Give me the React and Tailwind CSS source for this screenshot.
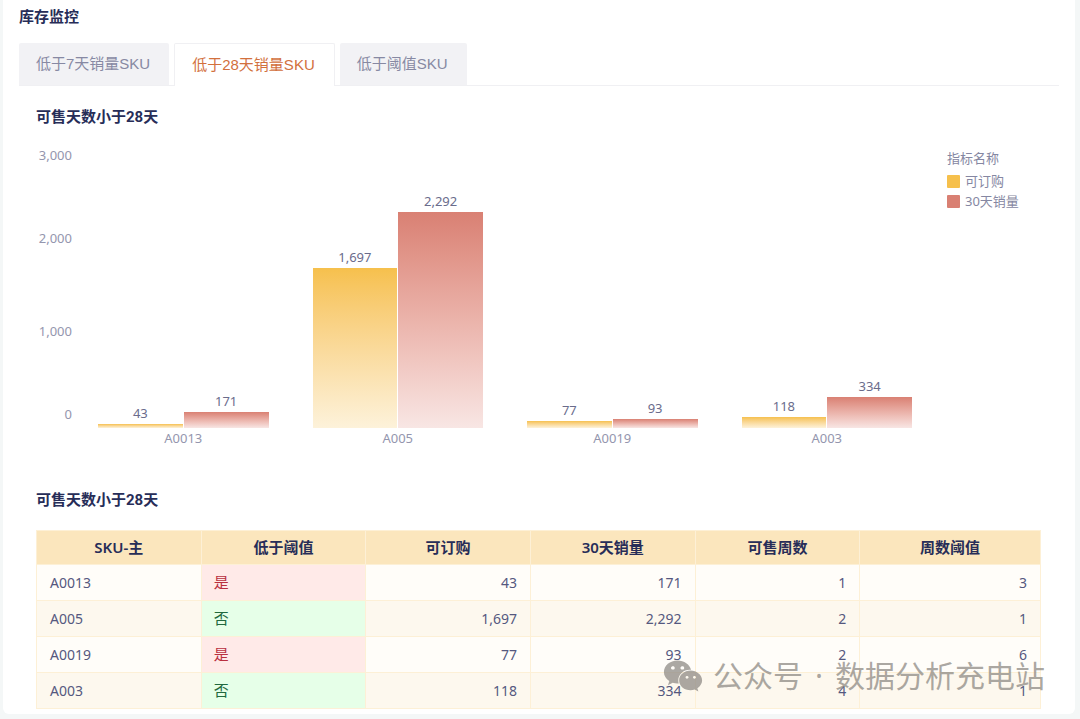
import React, { useState } from 'react';
import { FaWeixin } from 'react-icons/fa';

const tabs = ['低于7天销量SKU', '低于28天销量SKU', '低于阈值SKU'];

const rows = [
    { sku: 'A0013', below: '是', stock: 43, sales: 171, weeks: 1, limit: 3 },
    { sku: 'A005', below: '否', stock: 1697, sales: 2292, weeks: 2, limit: 1 },
    { sku: 'A0019', below: '是', stock: 77, sales: 93, weeks: 2, limit: 6 },
    { sku: 'A003', below: '否', stock: 118, sales: 334, weeks: 4, limit: 1 },
];

const headers = ['SKU-主', '低于阈值', '可订购', '30天销量', '可售周数', '周数阈值'];

const AXIS_MAX = 3000;

const format = (n) => n.toLocaleString('en-US');

const SectionTitle = ({ children }) => (
    <h2 className="font-['Roboto','Noto_Sans_CJK_SC',sans-serif] text-[15px] leading-6 font-bold text-[#272d58]">
        {children}
    </h2>
);

const Bar = ({ value, color }) => (
    <div className="flex h-full flex-1 flex-col justify-end">
        <span className="mb-px text-center leading-5 text-[#6a6c8c]">{format(value)}</span>
        <div className={`shrink-0 bg-linear-to-b ${color}`} style={{ height: `${(value / AXIS_MAX) * 100}%` }} />
    </div>
);

const BarChart = () => (
    <div className="mt-4 flex text-[13px] text-[#9496ae]">
        {/* y axis */}
        <div className="flex h-[283px] w-10 flex-col pr-1 pb-1 text-right leading-5">
            <div className="flex flex-1 items-start justify-end">3,000</div>
            <div className="flex flex-2 items-center justify-end">2,000</div>
            <div className="flex flex-2 items-center justify-end">1,000</div>
            <div className="flex flex-1 items-end justify-end">0</div>
        </div>

        {/* bars */}
        <div className="flex flex-1">
            {rows.map((row) => (
                <div key={row.sku} className="flex-1 px-[22px]">
                    <div className="flex h-[283px] gap-px">
                        <Bar value={row.stock} color="from-[#f6c04c] to-[#fdf2da]" />
                        <Bar value={row.sales} color="from-[#d98073] to-[#f8e6e4]" />
                    </div>
                    <div className="text-center leading-5">{row.sku}</div>
                </div>
            ))}
        </div>

        {/* legend */}
        <div className="ml-[13px] w-[94px] pt-[3px] leading-5 text-[#8587a2]">
            <div className="mb-[3px]">指标名称</div>
            <div className="flex items-center gap-[5px]">
                <span className="size-[13px] rounded-[1px] bg-[#f6c04c]" />
                可订购
            </div>
            <div className="flex items-center gap-[5px]">
                <span className="size-[13px] rounded-[1px] bg-[#d98073]" />
                30天销量
            </div>
        </div>
    </div>
);

const StockTable = () => (
    <table className="mt-[18px] w-full table-fixed border-collapse text-sm text-[#55587f]">
        <thead>
            <tr className="h-[34px] bg-[#fbe6bd] text-[15px] text-[#272d58]">
                {headers.map((header) => (
                    <th key={header} className="w-[16.4%] border border-[#fdf0d6] p-0 font-semibold last:w-auto">
                        {header}
                    </th>
                ))}
            </tr>
        </thead>
        <tbody>
            {rows.map((row) => (
                <tr key={row.sku} className="h-9 bg-[#fffdf9] even:bg-[#fdf8ee]">
                    <td className="border border-[#fdf0d6] px-[13px] py-0">{row.sku}</td>
                    <td
                        className={`border border-[#fdf0d6] px-3 py-0 text-[15px] ${
                            row.below === '是' ? 'bg-[#ffeae8] text-[#b9303f]' : 'bg-[#e6ffe8] text-[#22683e]'
                        }`}
                    >
                        {row.below}
                    </td>
                    {[row.stock, row.sales, row.weeks, row.limit].map((value, i) => (
                        <td key={i} className="border border-[#fdf0d6] px-[13px] py-0 text-right">
                            {format(value)}
                        </td>
                    ))}
                </tr>
            ))}
        </tbody>
    </table>
);

const App = () => {
    const [active, setActive] = useState(1);

    return (
        <div className="min-h-screen bg-[#f4f7f7] pr-[5px] pl-[3px] font-['Noto_Sans','Noto_Sans_CJK_SC',sans-serif]">
            <main className="relative rounded-b-md bg-white px-4 pt-1 pb-[5px]">
                <h1 className="text-[15px] leading-6 font-bold text-[#272d58]">库存监控</h1>

                <div className="mt-[15px] flex gap-[5px] border-b border-[#f0f0f3]">
                    {tabs.map((tab, i) => (
                        <button
                            key={tab}
                            type="button"
                            onClick={() => setActive(i)}
                            className={`rounded-t-xs pr-[19px] pl-[17px] font-['Liberation_Sans','Noto_Sans_CJK_SC',sans-serif] text-[15px] ${
                                active === i
                                    ? '-mb-px h-[43px] border border-b-0 border-[#f0f0f3] bg-white text-[#d2703d]'
                                    : 'h-[42px] bg-[#f2f2f5] text-[#8789a3]'
                            }`}
                        >
                            {tab}
                        </button>
                    ))}
                </div>

                <div className="pr-[18px] pl-[17px]">
                    <section className="pt-[19px]">
                        <SectionTitle>可售天数小于28天</SectionTitle>
                        <BarChart />
                    </section>

                    <section className="pt-10">
                        <SectionTitle>可售天数小于28天</SectionTitle>
                        <StockTable />
                    </section>
                </div>

                {/* watermark */}
                <div className="pointer-events-none absolute right-[30px] bottom-[18px] flex items-center gap-[10px] text-[30px] leading-9 text-[#8f8b85]/75">
                    <FaWeixin size={40} />
                    <p className="flex gap-3">
                        <span>公众号</span>
                        <span>·</span>
                        <span>数据分析充电站</span>
                    </p>
                </div>
            </main>
        </div>
    );
};

export default App;
